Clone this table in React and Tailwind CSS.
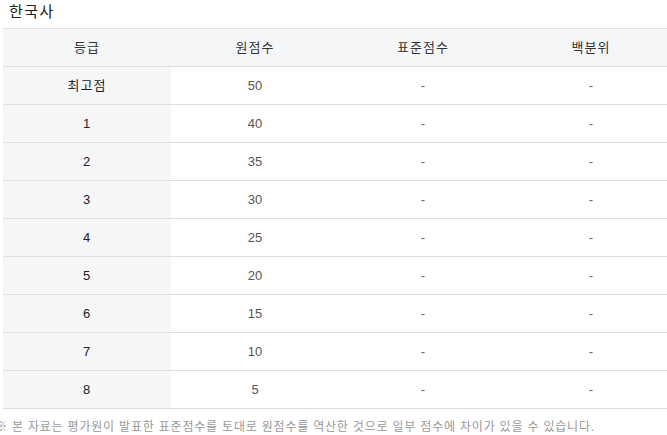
import React from "react";

const rows = [
  { grade: "최고점", raw: "50" },
  { grade: "1", raw: "40" },
  { grade: "2", raw: "35" },
  { grade: "3", raw: "30" },
  { grade: "4", raw: "25" },
  { grade: "5", raw: "20" },
  { grade: "6", raw: "15" },
  { grade: "7", raw: "10" },
  { grade: "8", raw: "5" },
];

const App = () => {
  return (
    <div
      className="w-[667px] h-[435px] overflow-hidden bg-white text-[#333]"
      style={{ fontFamily: '"Liberation Sans", "Noto Sans CJK KR", sans-serif' }}
    >
      {/* Title */}
      <div className="h-[28px] pl-[9px] pt-[1px] text-[15px] leading-[22px] tracking-[1.5px] text-[#222]">
        한국사
      </div>

      {/* Table */}
      <div className="ml-[3px] w-[672px]">
        <div className="grid grid-cols-4 h-[39px] border-t border-b border-[#dedede] bg-[#f5f6f8] text-[13px] tracking-[1px] text-[#333]">
          <div className="flex items-center justify-center">등급</div>
          <div className="flex items-center justify-center">원점수</div>
          <div className="flex items-center justify-center">표준점수</div>
          <div className="flex items-center justify-center">백분위</div>
        </div>
        {rows.map((row) => (
          <div
            key={row.grade}
            className="grid grid-cols-4 h-[38px] border-b border-[#dedede] text-[13px]"
          >
            <div className="flex items-center justify-center bg-[#f5f6f8] tracking-[1px] text-[#222]">
              {row.grade}
            </div>
            <div className="flex items-center justify-center text-[#555]">
              {row.raw}
            </div>
            <div className="flex items-center justify-center text-[#666]">-</div>
            <div className="flex items-center justify-center text-[#666]">-</div>
          </div>
        ))}
      </div>

      {/* Footnote */}
      <p className="ml-[-5px] mt-[10px] whitespace-nowrap text-[12px] leading-[16px] tracking-[0.8px] text-[#999]">
        ※ 본 자료는 평가원이 발표한 표준점수를 토대로 원점수를 역산한 것으로 일부 점수에 차이가 있을 수 있습니다.
      </p>
    </div>
  );
};

export default App;
